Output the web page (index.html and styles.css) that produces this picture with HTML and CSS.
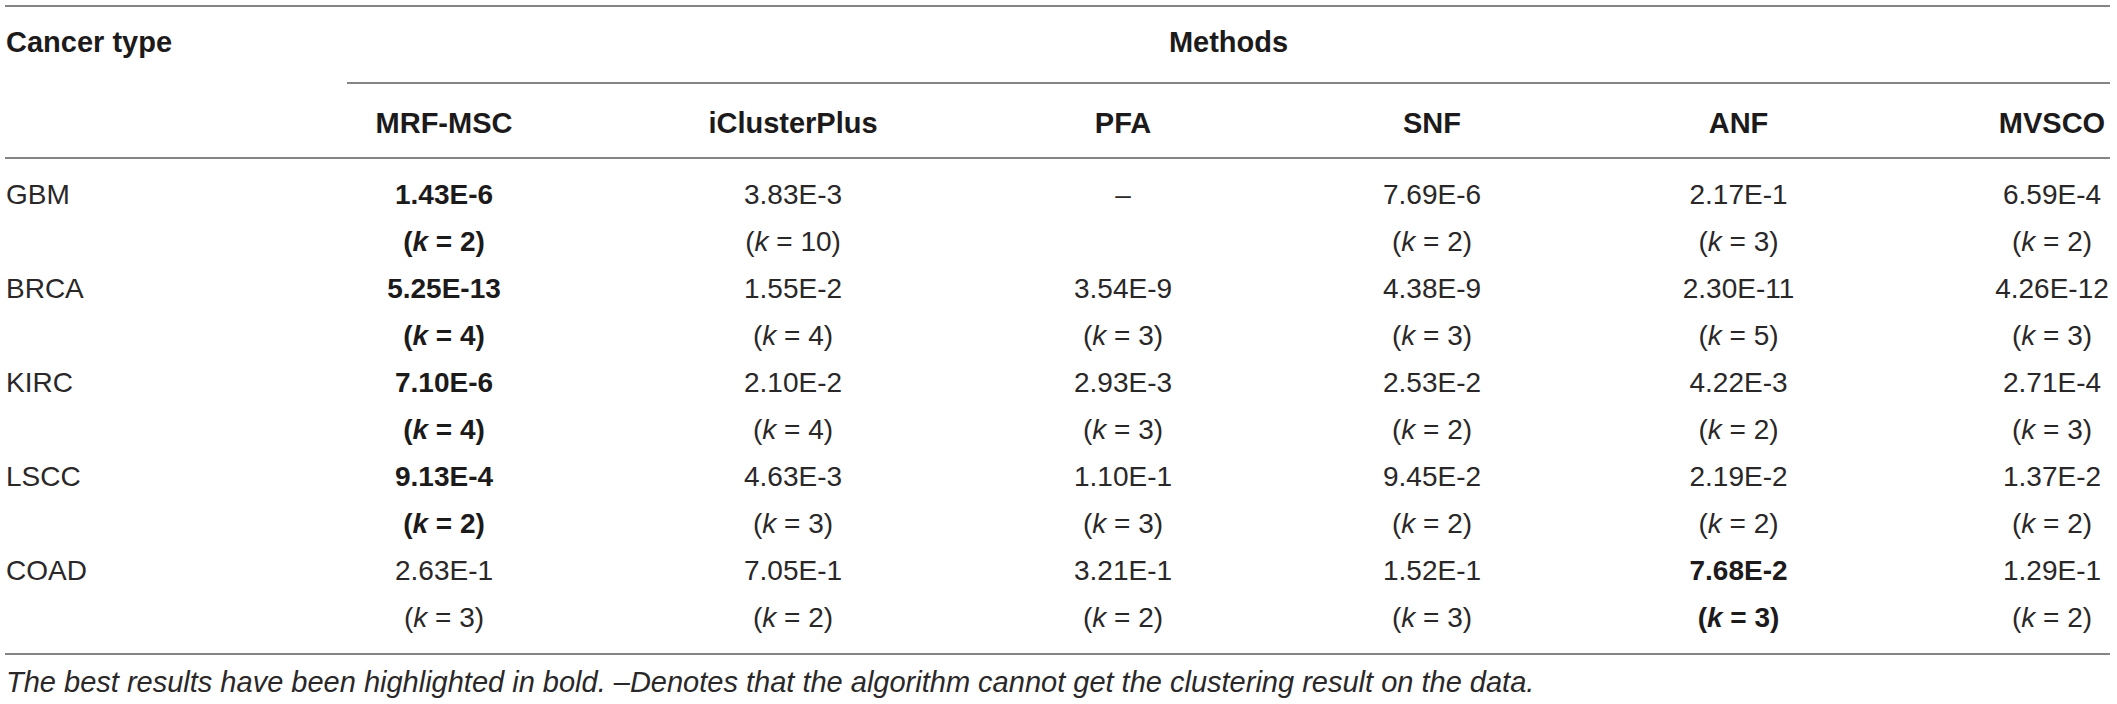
FILE: index.html
```html
<!DOCTYPE html>
<html>

<head>
    <title>Clustering results</title>
    <link rel="stylesheet" href="styles.css">
</head>

<body>
    <div class="table">
        <div class="thead">
            <div class="th th-type">Cancer type</div>
            <div class="th th-group">Methods</div>

            <div class="th th-name"></div>
            <div class="th th-name col-1">MRF-MSC</div>
            <div class="th th-name">iClusterPlus</div>
            <div class="th th-name">PFA</div>
            <div class="th th-name">SNF</div>
            <div class="th th-name">ANF</div>
            <div class="th th-name col-6">MVSCO</div>
        </div>

        <div class="tbody">
            <!-- GBM -->
            <div class="td td-type">GBM</div>
            <div class="td col-1 best">1.43E-6<br>(<i>k</i> = 2)</div>
            <div class="td">3.83E-3<br>(<i>k</i> = 10)</div>
            <div class="td">–</div>
            <div class="td">7.69E-6<br>(<i>k</i> = 2)</div>
            <div class="td">2.17E-1<br>(<i>k</i> = 3)</div>
            <div class="td col-6">6.59E-4<br>(<i>k</i> = 2)</div>

            <!-- BRCA -->
            <div class="td td-type">BRCA</div>
            <div class="td col-1 best">5.25E-13<br>(<i>k</i> = 4)</div>
            <div class="td">1.55E-2<br>(<i>k</i> = 4)</div>
            <div class="td">3.54E-9<br>(<i>k</i> = 3)</div>
            <div class="td">4.38E-9<br>(<i>k</i> = 3)</div>
            <div class="td">2.30E-11<br>(<i>k</i> = 5)</div>
            <div class="td col-6">4.26E-12<br>(<i>k</i> = 3)</div>

            <!-- KIRC -->
            <div class="td td-type">KIRC</div>
            <div class="td col-1 best">7.10E-6<br>(<i>k</i> = 4)</div>
            <div class="td">2.10E-2<br>(<i>k</i> = 4)</div>
            <div class="td">2.93E-3<br>(<i>k</i> = 3)</div>
            <div class="td">2.53E-2<br>(<i>k</i> = 2)</div>
            <div class="td">4.22E-3<br>(<i>k</i> = 2)</div>
            <div class="td col-6">2.71E-4<br>(<i>k</i> = 3)</div>

            <!-- LSCC -->
            <div class="td td-type">LSCC</div>
            <div class="td col-1 best">9.13E-4<br>(<i>k</i> = 2)</div>
            <div class="td">4.63E-3<br>(<i>k</i> = 3)</div>
            <div class="td">1.10E-1<br>(<i>k</i> = 3)</div>
            <div class="td">9.45E-2<br>(<i>k</i> = 2)</div>
            <div class="td">2.19E-2<br>(<i>k</i> = 2)</div>
            <div class="td col-6">1.37E-2<br>(<i>k</i> = 2)</div>

            <!-- COAD -->
            <div class="td td-type">COAD</div>
            <div class="td col-1">2.63E-1<br>(<i>k</i> = 3)</div>
            <div class="td">7.05E-1<br>(<i>k</i> = 2)</div>
            <div class="td">3.21E-1<br>(<i>k</i> = 2)</div>
            <div class="td">1.52E-1<br>(<i>k</i> = 3)</div>
            <div class="td best">7.68E-2<br>(<i>k</i> = 3)</div>
            <div class="td col-6">1.29E-1<br>(<i>k</i> = 2)</div>
        </div>
    </div>

    <p class="footnote">The best results have been highlighted in bold. –Denotes that the algorithm cannot get the clustering result on the data.</p>
</body>

</html>
```

FILE: styles.css
```css
body {
    margin: 0;
    background: #fff;
    color: #2a2728;
    font-family: "Liberation Sans", Arial, sans-serif;
}

.table {
    width: 2105px;
    margin: 5px 0 0 5px;
}

.thead,
.tbody {
    display: grid;
    grid-template-columns: 342px 274px 344px 316px 302px 311px 216px;
}

.thead {
    border-top: 2px solid #858585;
    border-bottom: 2px solid #858585;
}

.tbody {
    padding: 12px 0;
    border-bottom: 2px solid #858585;
}

.th {
    font-size: 29px;
    font-weight: bold;
    color: #1c1a1b;
    text-align: center;
}

.th-type {
    text-align: left;
    line-height: 70px;
    padding: 0 0 5px 1px;
}

.th-group {
    grid-column: 2 / -1;
    line-height: 70px;
    padding-bottom: 5px;
    border-bottom: 2px solid #858585;
}

.th-name {
    line-height: 68px;
    padding-top: 5px;
}

.td {
    font-size: 28px;
    line-height: 47px;
    text-align: center;
}

.td-type {
    text-align: left;
    padding-left: 1px;
}

.best {
    font-weight: bold;
    color: #1c1a1b;
}

.col-1 {
    padding-right: 80px;
}

.col-6 {
    padding-left: 100px;
}

.footnote {
    margin: 11px 0 0 6px;
    font-size: 29px;
    line-height: 32px;
    font-style: italic;
}
```
